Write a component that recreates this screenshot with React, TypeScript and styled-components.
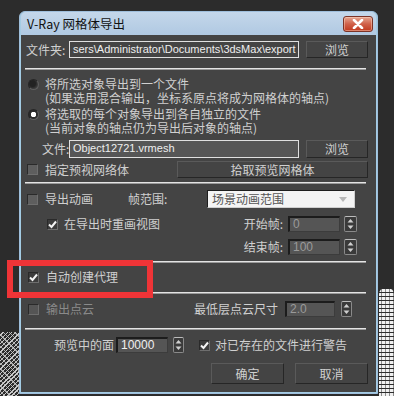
import { FC, ReactNode } from 'react';
import styled, { createGlobalStyle } from 'styled-components';

const GlobalStyle = createGlobalStyle`
    html, body {
        margin: 0;
        padding: 0;
        background: #2c2c2c;
    }
    * {
        box-sizing: border-box;
    }
`;

const FONT = `'Noto Sans CJK SC', 'Liberation Sans', sans-serif`;

const Checkbox: FC<{ checked?: boolean; disabled?: boolean }> = ({ checked, disabled }) => (
    <ScCheck $checked={checked} $disabled={disabled}>
        {checked && (
            <svg width='9' height='9' viewBox='0 0 9 9'>
                <path d='M1 4.5 L3.5 7 L8 1.5' fill='none' stroke='#f4f4f4' strokeWidth='2' />
            </svg>
        )}
    </ScCheck>
);

const Spinner: FC<{ $w?: number }> = ({ $w = 12 }) => (
    <ScSpin $w={$w}>
        <svg width='7' height='12' viewBox='0 0 7 12'>
            <path d='M3.5 1 L6.5 4.5 L0.5 4.5 Z' fill='#cfcfcf' />
            <path d='M3.5 11 L6.5 7.5 L0.5 7.5 Z' fill='#cfcfcf' />
        </svg>
    </ScSpin>
);

const CheckItem: FC<{ checked?: boolean; disabled?: boolean; children: ReactNode; $w?: number; $gap?: number }> = ({
    checked,
    disabled,
    children,
    $w,
    $gap,
}) => (
    <ScCheckItem $w={$w} $gap={$gap} $disabled={disabled}>
        <Checkbox checked={checked} disabled={disabled} />
        <span>{children}</span>
    </ScCheckItem>
);

export default function App() {
    return (
        <>
            <GlobalStyle />
            <Desktop>
                <NoiseLeft />
                <NoiseRight />
                <Window>
                    <TitleBar>
                        <span>V-Ray 网格体导出</span>
                        <CloseBtn>
                            <svg width='12' height='10' viewBox='0 0 12 10'>
                                <path d='M2 1 L10 9 M10 1 L2 9' stroke='#fff' strokeWidth='2.6' strokeLinecap='round' />
                            </svg>
                        </CloseBtn>
                    </TitleBar>
                    <Body>
                        <Row $h={17} $mt={0}>
                            <FieldLabel>文件夹:</FieldLabel>
                            <PathInput>sers\Administrator\Documents\3dsMax\export</PathInput>
                            <Button $w={62} $ml={7}>浏览</Button>
                        </Row>
                        <Separator $mt={10} />
                        <Options>
                            <Option>
                                <Radio />
                                <OptionText>
                                    <Line>将所选对象导出到一个文件</Line>
                                    <Line>(如果选用混合输出，坐标系原点将成为网格体的轴点)</Line>
                                </OptionText>
                            </Option>
                            <Option>
                                <Radio $checked />
                                <OptionText>
                                    <Line>将选取的每个对象导出到各自独立的文件</Line>
                                    <Line>(当前对象的轴点仍为导出后对象的轴点)</Line>
                                </OptionText>
                            </Option>
                        </Options>
                        <Row $h={18} $mt={5}>
                            <FieldLabel $indent={17}>文件:</FieldLabel>
                            <PathInput $light>Object12721.vrmesh</PathInput>
                            <Button $w={62} $ml={7}>浏览</Button>
                        </Row>
                        <Row $h={17} $mt={3}>
                            <CheckItem>指定预视网络体</CheckItem>
                            <Button $w={191} $ml={0} $auto>拾取预览网格体</Button>
                        </Row>
                        <Separator $mt={4} />
                        <Row $h={18} $mt={6}>
                            <CheckItem $w={103}>导出动画</CheckItem>
                            <Text $w={79}>帧范围:</Text>
                            <Dropdown>
                                <span>场景动画范围</span>
                                <svg width='8' height='5' viewBox='0 0 8 5'>
                                    <path d='M0 0 L8 0 L4 5 Z' fill='#b8b8b8' />
                                </svg>
                            </Dropdown>
                        </Row>
                        <Row $h={16} $mt={8} $indent={20}>
                            <CheckItem checked $gap={6}>在导出时重画视图</CheckItem>
                            <RightGroup $mr={11}>
                                <Text>开始帧:</Text>
                                <NumInput $w={52} $dim>0</NumInput>
                                <Spinner $w={13} />
                            </RightGroup>
                        </Row>
                        <Row $h={16} $mt={7}>
                            <RightGroup $mr={11}>
                                <Text>结束帧:</Text>
                                <NumInput $w={52} $dim>100</NumInput>
                                <Spinner $w={13} />
                            </RightGroup>
                        </Row>
                        <Separator $mt={6} />
                        <Row $h={16} $mt={6} $indent={1}>
                            <CheckItem checked>自动创建代理</CheckItem>
                        </Row>
                        <Separator $mt={7} />
                        <Row $h={16} $mt={7} $indent={1}>
                            <CheckItem disabled>输出点云</CheckItem>
                            <RightGroup $mr={16} $gap={6}>
                                <Text>最低层点云尺寸</Text>
                                <NumInput $w={50} $dim>2.0</NumInput>
                                <Spinner $w={11} />
                            </RightGroup>
                        </Row>
                        <Separator $mt={11} />
                        <Row $h={16} $mt={7} $indent={29}>
                            <Text>预览中的面</Text>
                            <NumInput $w={52} $ml={2}>10000</NumInput>
                            <SpinSlot>
                                <Spinner $w={11} />
                            </SpinSlot>
                            <CheckItem checked $gap={5}>对已存在的文件进行警告</CheckItem>
                        </Row>
                        <Buttons>
                            <Button $w={73} $ml={0}>确定</Button>
                            <Button $w={73} $ml={0}>取消</Button>
                        </Buttons>
                    </Body>
                </Window>
                <Highlight />
            </Desktop>
        </>
    );
}

const Desktop = styled.div`
    position: relative;
    width: 394px;
    height: 396px;
    overflow: hidden;
    background: #2c2c2c;
    padding: 11px 0 0 19px;
    font-family: ${FONT};
`;

const NoiseLeft = styled.div`
    position: absolute;
    left: 0;
    top: 332px;
    width: 19px;
    height: 64px;
    background:
        repeating-linear-gradient(135deg, transparent 0 2px, #e6e6e6 2px 3px),
        repeating-linear-gradient(45deg, transparent 0 3px, #bdbdbd 3px 4px);
    opacity: 0.85;
`;

const NoiseRight = styled.div`
    position: absolute;
    left: 379px;
    top: 288px;
    width: 15px;
    height: 108px;
    border-radius: 6px 6px 0 0;
    background:
        repeating-linear-gradient(0deg, transparent 0 3px, #2c2c2c 3px 4px),
        repeating-linear-gradient(90deg, #f0f0f0 0 2px, #8a8a8a 2px 3px, #f0f0f0 3px 4px);
`;

const Window = styled.div`
    width: 359px;
    height: 383px;
    display: flex;
    flex-direction: column;
    border: 1px solid #9fbfdc;
    border-radius: 6px 6px 0 0;
    background: #a4cce4;
    padding: 0 1px 1px;
`;

const TitleBar = styled.div`
    height: 23px;
    display: flex;
    align-items: center;
    justify-content: space-between;
    padding: 0 3px 0 6px;
    background: linear-gradient(#c4d7ea, #b0c9e2);
    border-radius: 5px 5px 0 0;
    color: #111;
    font-size: 12.5px;
`;

const CloseBtn = styled.div`
    width: 30px;
    height: 16px;
    display: flex;
    align-items: center;
    justify-content: center;
    border: 1px solid #7c3326;
    border-radius: 3px;
    background: linear-gradient(#e6a792, #d0614a 50%, #c0391f);
    box-shadow: inset 0 0 0 1px rgba(255, 220, 200, 0.45);
`;

const Body = styled.div`
    flex: 1;
    display: flex;
    flex-direction: column;
    background: #444444;
    padding: 6px 8px 8px 4px;
    color: #d0d0d0;
    font-size: 12px;
`;

const Row = styled.div<{ $h: number; $mt: number; $indent?: number }>`
    display: flex;
    align-items: center;
    height: ${(p) => p.$h}px;
    margin-top: ${(p) => p.$mt}px;
    padding-left: ${(p) => p.$indent ?? 0}px;
    line-height: 16px;
    white-space: nowrap;
`;

const FieldLabel = styled.span<{ $indent?: number }>`
    flex: none;
    width: 44px;
    padding-left: ${(p) => p.$indent ?? 1}px;
`;

const PathInput = styled.div<{ $light?: boolean }>`
    flex: none;
    width: 230px;
    height: 100%;
    padding: 0 3px;
    overflow: hidden;
    white-space: nowrap;
    border: 1px solid #e0e0e0;
    background: ${(p) => (p.$light ? '#565656' : '#444444')};
    color: #eeeeee;
    font-family: 'Liberation Sans', sans-serif;
    font-size: 11px;
    line-height: 15px;
`;

const Button = styled.div<{ $w: number; $ml: number; $auto?: boolean }>`
    flex: none;
    width: ${(p) => p.$w}px;
    height: 100%;
    margin-left: ${(p) => (p.$auto ? 'auto' : `${p.$ml}px`)};
    display: flex;
    align-items: center;
    justify-content: center;
    background: #444444;
    border: 1px solid #262626;
    border-top-color: #5a5a5a;
    border-left-color: #5a5a5a;
    color: #d0d0d0;
`;

const Separator = styled.div<{ $mt: number }>`
    flex: none;
    height: 2px;
    margin-top: ${(p) => p.$mt}px;
    margin-right: 2px;
    background: #e4e4e4;
    border-bottom: 1px solid #9a9a9a;
`;

const Options = styled.div`
    display: flex;
    flex-direction: column;
    gap: 2px;
    margin-top: 7px;
`;

const Option = styled.div`
    display: flex;
    gap: 6px;
    padding-left: 3px;
`;

const OptionText = styled.div`
    display: flex;
    flex-direction: column;
`;

const Line = styled.div`
    height: 14px;
    line-height: 14px;
    white-space: nowrap;
`;

const Radio = styled.span<{ $checked?: boolean }>`
    flex: none;
    width: 11px;
    height: 11px;
    margin-top: 2px;
    border-radius: 50%;
    background: ${(p) =>
        p.$checked
            ? 'radial-gradient(circle, #ffffff 0 2.5px, #2a2a2a 3px)'
            : 'radial-gradient(circle at 40% 40%, #222 0 3px, #3a3a3a 5px)'};
    border: 1px solid #5e5e5e;
    border-top-color: #262626;
    border-left-color: #262626;
`;

const ScCheckItem = styled.div<{ $w?: number; $gap?: number; $disabled?: boolean }>`
    flex: none;
    display: flex;
    align-items: center;
    gap: ${(p) => p.$gap ?? 7}px;
    width: ${(p) => (p.$w ? `${p.$w}px` : 'auto')};
    padding-left: 2px;
    color: ${(p) => (p.$disabled ? '#8a8a8a' : '#d0d0d0')};
`;

const ScCheck = styled.span<{ $checked?: boolean; $disabled?: boolean }>`
    flex: none;
    width: 11px;
    height: 11px;
    display: flex;
    align-items: center;
    justify-content: center;
    background: ${(p) => (p.$checked ? '#3c3c3c' : p.$disabled ? '#555555' : '#5e5e5e')};
    border: 1px solid #6e6e6e;
    border-top-color: #2a2a2a;
    border-left-color: #2a2a2a;
`;

const Text = styled.span<{ $w?: number }>`
    flex: none;
    width: ${(p) => (p.$w ? `${p.$w}px` : 'auto')};
`;

const Dropdown = styled.div`
    flex: none;
    width: 148px;
    height: 100%;
    display: flex;
    align-items: center;
    justify-content: space-between;
    padding: 0 7px 0 4px;
    background: #f4f4f4;
    border: 1px solid #1e1e1e;
    border-right-color: #cfcfcf;
    border-bottom-color: #cfcfcf;
    color: #555555;
`;

const RightGroup = styled.div<{ $mr: number; $gap?: number }>`
    display: flex;
    align-items: center;
    gap: ${(p) => p.$gap ?? 4}px;
    height: 100%;
    margin-left: auto;
    margin-right: ${(p) => p.$mr}px;

    & > span:first-child {
        margin-right: 1px;
    }
`;

const NumInput = styled.div<{ $w: number; $dim?: boolean; $ml?: number }>`
    flex: none;
    width: ${(p) => p.$w}px;
    height: 100%;
    margin-left: ${(p) => p.$ml ?? 0}px;
    padding: 0 3px;
    background: #555555;
    border: 2px solid #1c1c1c;
    border-right: 1px solid #3c3c3c;
    border-bottom: 1px solid #3c3c3c;
    color: ${(p) => (p.$dim ? '#9a9a9a' : '#f0f0f0')};
    font-family: 'Liberation Sans', sans-serif;
    font-size: 12px;
    line-height: 13px;
`;

const SpinSlot = styled.div`
    display: flex;
    height: 100%;
    margin: 0 13px 0 5px;
`;

const ScSpin = styled.div<{ $w: number }>`
    flex: none;
    width: ${(p) => p.$w}px;
    height: 100%;
    display: flex;
    align-items: center;
    justify-content: center;
    background: #3a3a3a;
    border: 1px solid #8a8a8a;
    border-top-color: #bcbcbc;
    border-radius: 2px;
`;

const Buttons = styled.div`
    display: flex;
    justify-content: flex-end;
    gap: 11px;
    height: 21px;
    margin-top: 10px;
`;

const Highlight = styled.div`
    position: absolute;
    left: 7px;
    top: 260px;
    width: 146px;
    height: 38px;
    border: 6px solid #ef3437;
`;
